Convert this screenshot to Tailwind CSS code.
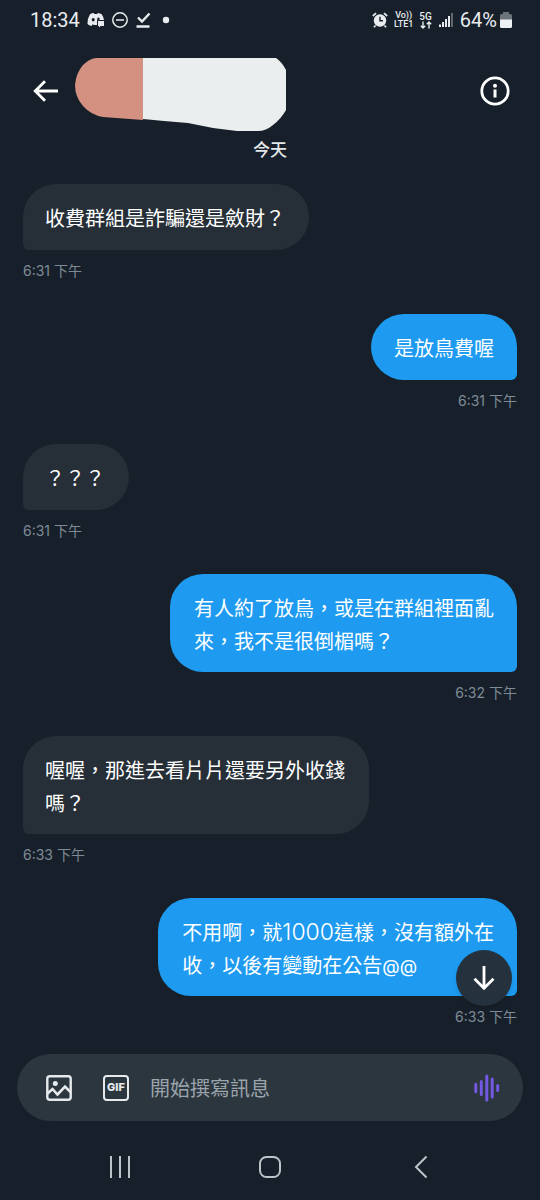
<!DOCTYPE html>
<html lang="zh-Hant">
<head>
<meta charset="utf-8">
<meta name="viewport" content="width=device-width, initial-scale=1">
<title>訊息</title>
<script src="https://cdn.jsdelivr.net/npm/@tailwindcss/browser@4"></script>
</head>
<body class="min-h-screen bg-[#17202a] font-['Inter','Noto_Sans_CJK_TC',sans-serif] text-white">
<div class="flex min-h-screen flex-col">

  <!-- Status bar -->
  <div class="flex h-10 items-center justify-between pr-7 pl-[30px] font-['Roboto',sans-serif] text-[20px] text-[#e8ecef]">
    <div class="flex items-center gap-[7px]">
      <span>18:34</span>
      <svg class="h-4 w-[18px]" viewBox="0 0 18 16" fill="currentColor"><path fill-rule="evenodd" d="M3 2.200Q5 1 6.800 1L7.300 2H10.200L10.800 1Q13 1.200 14.700 2.300Q16.600 5 17 8H10V13H7L5.700 12.200L4.500 14Q2 13.400 .5 12Q.2 6.500 3 2.200ZM6.200 6a1.500 1.700 0 1 0 .01 0ZM11.400 5.600a1.300 1.300 0 1 0 .01 0Z"/><path d="M11 9h6v5h-3.500L12 15.600V14h-1z"/></svg>
      <svg class="size-4" viewBox="0 0 16 16" fill="none" stroke="currentColor" stroke-width="1.500"><circle cx="8" cy="8" r="7.200"/><path d="M4 8h8"/></svg>
      <svg class="size-4" viewBox="0 0 16 16" fill="none" stroke="currentColor" stroke-width="2.400"><path d="M3 5.500l4 4L14.500 1.500M1.500 14.500h13"/></svg>
      <svg class="ml-1 size-2" viewBox="0 0 8 8" fill="currentColor"><circle cx="4" cy="4" r="3.200"/></svg>
    </div>
    <div class="flex items-center gap-[6px]">
      <svg class="size-4" viewBox="0 0 16 16" fill="none" stroke="currentColor"><circle cx="8" cy="8.500" r="6.200" fill="currentColor" stroke="none"/><path d="M.8 4L4 1.200M15.200 4L12 1.200M3.500 13.500L2 15.200M12.500 13.500L14 15.200" stroke-width="1.700"/><path d="M8 4.800v4h3" stroke="#17202a" stroke-width="1.400"/></svg>
      <span class="flex flex-col items-center text-[9px] leading-[9px] font-medium"><span>Vo))</span><span>LTE1</span></span>
      <span class="flex flex-col items-center text-[10px] leading-[9px] font-medium"><span>5G</span>
        <svg class="h-2 w-3" viewBox="0 0 12 8" fill="none" stroke="currentColor" stroke-width="1.400"><path d="M3 .5v6.500M.8 4.700L3 7l2.200-2.300M9 7.500V1M6.800 3.300L9 1l2.200 2.300"/></svg>
      </span>
      <svg class="h-4 w-4" viewBox="0 0 16 16" fill="currentColor"><path d="M1 12.500h2V15H1zM4 10h2v5H4zM7 7h2v8H7zM10 4h2v11h-2z"/><path opacity=".35" d="M13 1h2v14h-2z"/></svg>
      <div class="flex items-center gap-[3px]"><span>64%</span>
      <svg class="h-4 w-3" viewBox="0 0 12 16"><path d="M3 0h6v2h1.500Q12 2 12 3.500V8H0V3.500Q0 2 1.500 2H3z" fill="#6b737b"/><path d="M0 7.500h12v7q0 1.500-1.500 1.500h-9Q0 16 0 14.500z" fill="#eef1f3"/></svg></div>
    </div>
  </div>

  <!-- Conversation header -->
  <header class="flex h-[98px] items-start justify-between pr-[30px] pl-8">
    <div class="flex items-start">
      <button type="button" aria-label="返回" class="mt-9 flex h-[30px] w-[42px] items-center">
        <svg class="h-6 w-7" viewBox="0 0 28 24" fill="none" stroke="currentColor" stroke-width="2.800"><path d="M26 12H3.500M13 2.200L3.200 12l9.800 9.800"/></svg>
      </button>
      <svg class="mt-[17px] h-[75px] w-[213px]" viewBox="0 0 213 75">
        <path d="M22 1H69V63L29 60Q17 58 9 49Q1 40 1 28Q2 16 9 8Q15 2 22 1Z" fill="#d49080"/>
        <path d="M69 1H202Q208 5 212 13V53Q207 62 199 68Q192 74 184 74H163L139 71L114 66L90 64L69 62Z" fill="#ebeeee"/>
      </svg>
    </div>
    <button type="button" aria-label="對話資訊" class="mt-9 rounded-full">
      <svg class="size-[30px]" viewBox="0 0 30 30" fill="none" stroke="currentColor" stroke-width="2.800"><circle cx="15" cy="15" r="13.200"/><path d="M15 13.500v8" stroke-width="3"/><circle cx="15" cy="9.800" r="2" fill="currentColor" stroke="none"/></svg>
    </button>
  </header>

  <!-- Messages -->
  <main class="relative flex flex-col px-[23px]">
    <h2 class="mb-[22px] text-center text-[17px] leading-6 font-medium text-[#e4e8eb]">今天</h2>

    <div class="mb-8 flex flex-col items-start">
      <p class="rounded-[33px] rounded-bl-[6px] bg-[#262f37] pt-[19px] pr-6 pb-[14px] pl-[22px] text-[20px] leading-[33px]">收費群組是詐騙還是斂財？</p>
      <time class="mt-[10px] text-[14px] leading-[22px] text-[#7e8b97]">6:31 下午</time>
    </div>
    <div class="mb-8 flex flex-col items-end">
      <p class="rounded-[33px] rounded-br-[6px] bg-[#1e9bf0] px-[23px] pt-[19px] pb-[14px] text-[20px] leading-[33px]">是放鳥費喔</p>
      <time class="mt-[10px] text-[14px] leading-[22px] text-[#7e8b97]">6:31 下午</time>
    </div>
    <div class="mb-8 flex flex-col items-start">
      <p class="rounded-[33px] rounded-bl-[6px] bg-[#262f37] pt-[19px] pr-6 pb-[14px] pl-[22px] text-[20px] leading-[33px]">？？？</p>
      <time class="mt-[10px] text-[14px] leading-[22px] text-[#7e8b97]">6:31 下午</time>
    </div>
    <div class="mb-8 flex flex-col items-end">
      <p class="rounded-[33px] rounded-br-[6px] bg-[#1e9bf0] pt-[19px] pr-[23px] pb-[13px] pl-6 text-[20px] leading-[33px]">有人約了放鳥，或是在群組裡面亂<br>來，我不是很倒楣嗎？</p>
      <time class="mt-[10px] text-[14px] leading-[22px] text-[#7e8b97]">6:32 下午</time>
    </div>
    <div class="mb-8 flex flex-col items-start">
      <p class="rounded-[33px] rounded-bl-[6px] bg-[#262f37] pt-[19px] pr-6 pb-[13px] pl-[22px] text-[20px] leading-[33px]">喔喔，那進去看片片還要另外收錢<br>嗎？</p>
      <time class="mt-[10px] text-[14px] leading-[22px] text-[#7e8b97]">6:33 下午</time>
    </div>
    <div class="mb-[26px] flex flex-col items-end">
      <p class="rounded-[33px] rounded-br-[6px] bg-[#1e9bf0] pt-[19px] pr-[23px] pb-[13px] pl-6 text-[20px] leading-[33px]">不用啊，就<span class="text-[23px] leading-none font-light">1000</span>這樣，沒有額外在<br>收，以後有變動在公告<span class="text-[18px] leading-none">@@</span></p>
      <time class="mt-[10px] text-[14px] leading-[22px] text-[#7e8b97]">6:33 下午</time>
    </div>

    <button type="button" aria-label="捲動到最新訊息" class="absolute right-7 bottom-12 flex size-14 items-center justify-center rounded-full bg-[#25313d] shadow-md">
      <svg class="h-[26px] w-[22px]" viewBox="0 0 22 26" fill="none" stroke="currentColor" stroke-width="2.800"><path d="M11 1v22M1.500 13.800L11 23.300l9.500-9.500"/></svg>
    </button>
  </main>

  <!-- Composer -->
  <form class="mx-[17px] flex h-[67px] items-center rounded-full bg-[#2b363f] pr-[23px] pl-[29px] text-[#e6eaed]">
    <button type="button" aria-label="新增圖片">
      <svg class="size-[26px]" viewBox="0 0 26 26" fill="none" stroke="currentColor" stroke-width="2.400"><rect x="1.300" y="1.300" width="23.400" height="23.400" rx="2.500"/><path d="M1.500 18.500L6.500 14l5 5.500L19 11.500l5.500 5.500" stroke-width="2.600"/><circle cx="9.300" cy="8.500" r="2.500" fill="currentColor" stroke="none"/></svg>
    </button>
    <button type="button" aria-label="新增 GIF" class="ml-[31px] flex size-[26px] items-center justify-center rounded-[4px] border-2 border-current font-['Inter',sans-serif] text-[11px] leading-none font-extrabold">GIF</button>
    <input type="text" aria-label="開始撰寫訊息" placeholder="開始撰寫訊息" class="ml-[21px] min-w-0 flex-1 bg-transparent pt-[3px] text-[20px] leading-8 outline-none placeholder:text-[#9ba4ab]">
    <button type="button" aria-label="錄製語音訊息">
      <svg class="h-7 w-[26px]" viewBox="0 0 26 28" fill="none" stroke="#7359e2" stroke-width="3" stroke-linecap="round"><path d="M1.800 10.200v7.600M7.300 7.500v13M12.800 2v24M18.200 5v18M23.700 11.500v5"/></svg>
    </button>
  </form>

  <!-- System navigation -->
  <nav class="mt-8 mb-5 grid h-[27px] grid-cols-[1fr_62px_1fr] items-center text-[#bcc3c9]">
    <button type="button" aria-label="最近使用的應用程式" class="flex justify-center">
      <svg class="h-[22px] w-[22px]" viewBox="0 0 22 22" stroke="currentColor" stroke-width="2"><path d="M2 0v22M11 0v22M20 0v22"/></svg>
    </button>
    <button type="button" aria-label="主畫面" class="flex justify-center">
      <svg class="size-6" viewBox="0 0 24 24" fill="none" stroke="currentColor" stroke-width="2"><rect x="2" y="2" width="20" height="20" rx="6.500"/></svg>
    </button>
    <button type="button" aria-label="上一頁" class="flex justify-center">
      <svg class="h-6 w-[14px]" viewBox="0 0 14 24" fill="none" stroke="currentColor" stroke-width="2"><path d="M12.500 1.500L2 12l10.500 10.500"/></svg>
    </button>
  </nav>
</div>
</body>
</html>
